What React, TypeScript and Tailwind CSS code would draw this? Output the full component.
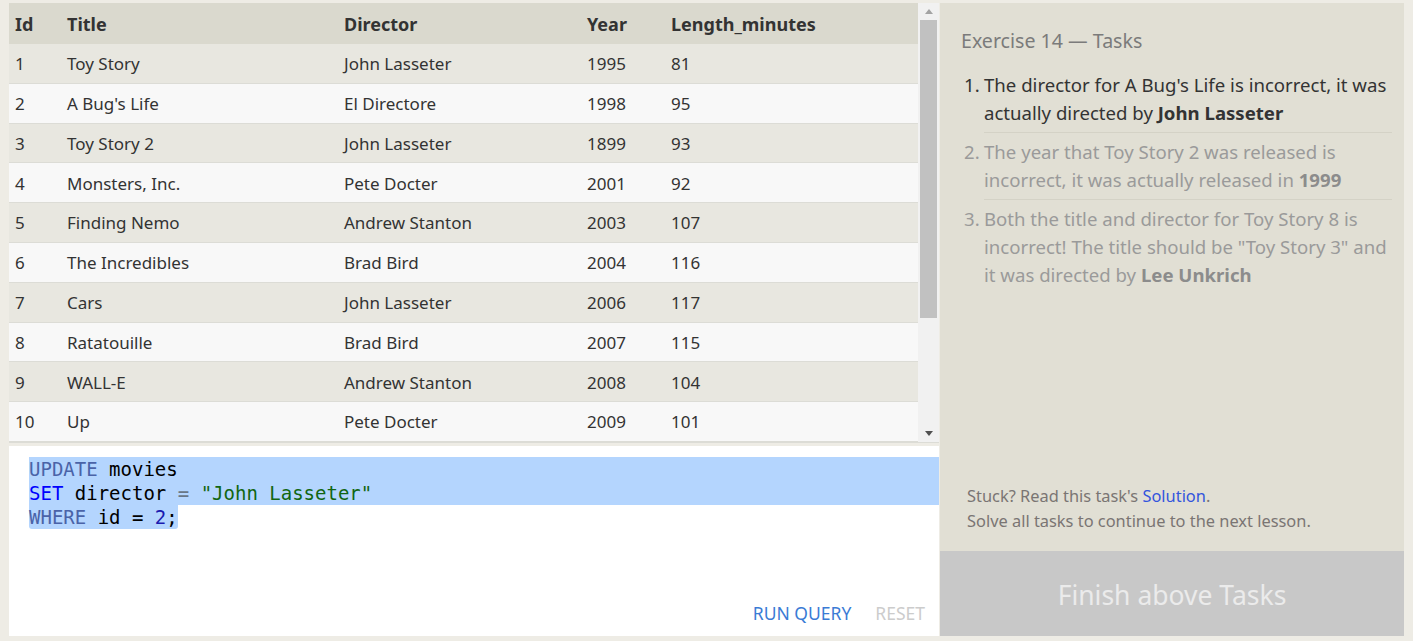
import React from "react";

const rows: [number, string, string, number, number][] = [
  [1, "Toy Story", "John Lasseter", 1995, 81],
  [2, "A Bug's Life", "El Directore", 1998, 95],
  [3, "Toy Story 2", "John Lasseter", 1899, 93],
  [4, "Monsters, Inc.", "Pete Docter", 2001, 92],
  [5, "Finding Nemo", "Andrew Stanton", 2003, 107],
  [6, "The Incredibles", "Brad Bird", 2004, 116],
  [7, "Cars", "John Lasseter", 2006, 117],
  [8, "Ratatouille", "Brad Bird", 2007, 115],
  [9, "WALL-E", "Andrew Stanton", 2008, 104],
  [10, "Up", "Pete Docter", 2009, 101],
];

function Row({ r, i }: { r: (typeof rows)[number]; i: number }) {
  return (
    <div
      className={`flex h-[39.8px] items-center border-b border-[#dcdcd6] pt-[1px] text-[17px] text-[#333] ${
        i % 2 === 0 ? "bg-[#e8e7e0]" : "bg-[#f8f8f8]"
      }`}
    >
      <div className="w-[52px] pl-[6px]">{r[0]}</div>
      <div className="w-[277px] pl-[6px]">{r[1]}</div>
      <div className="w-[243px] pl-[6px]">{r[2]}</div>
      <div className="w-[84px] pl-[6px]">{r[3]}</div>
      <div className="flex-1 pl-[6px]">{r[4]}</div>
    </div>
  );
}

export default function App() {
  return (
    <div
      className="flex h-[641px] w-[1413px] bg-[#eeece5] pl-[9px] pr-[9px] pt-[3px] pb-[5px]"
      style={{ fontFamily: '"Noto Sans", "Open Sans", sans-serif' }}
    >
      <div className="flex w-[930px] flex-col">
        <div className="flex h-[440px] border-b border-[#dcdcd6]">
          <div className="flex-1">
            <div className="flex h-[41px] items-center bg-[#dad9ce] pt-[1px] text-[18px] font-bold text-[#333]">
              <div className="w-[52px] pl-[6px]">Id</div>
              <div className="w-[277px] pl-[6px]">Title</div>
              <div className="w-[243px] pl-[6px]">Director</div>
              <div className="w-[84px] pl-[6px]">Year</div>
              <div className="flex-1 pl-[6px]">Length_minutes</div>
            </div>
            {rows.map((r, i) => (
              <Row key={r[0]} r={r} i={i} />
            ))}
          </div>
          <div className="flex w-[21px] flex-col bg-[#f1f1f1]">
            <div className="flex h-[17px] items-center justify-center">
              <svg width="8" height="5" viewBox="0 0 8 5">
                <path d="M4 0L8 5H0Z" fill="#a3a3a3" />
              </svg>
            </div>
            <div className="mx-[2px] h-[298px] bg-[#c1c1c1]" />
            <div className="flex-1" />
            <div className="flex h-[17px] items-center justify-center">
              <svg width="8" height="5" viewBox="0 0 8 5">
                <path d="M0 0H8L4 5Z" fill="#505050" />
              </svg>
            </div>
          </div>
        </div>
        <div className="mt-[3px] flex flex-1 flex-col bg-white">
          <div
            className="pt-[11px] text-[19px] leading-[24px] text-black"
            style={{ fontFamily: '"DejaVu Sans Mono", "Liberation Mono", monospace' }}
          >
            <div className="ml-[20px] bg-[#b4d5fe]">
              <span className="text-[#4a63a8]">UPDATE</span> movies
            </div>
            <div className="ml-[20px] bg-[#b4d5fe]">
              <span className="text-[#0000ff]">SET</span> director{" "}
              <span className="text-[#687687]">=</span>{" "}
              <span className="text-[#116611]">"John Lasseter"</span>
            </div>
            <div className="ml-[20px] w-fit rounded-b-[3px] bg-[#b4d5fe]">
              <span className="text-[#4a63a8]">WHERE</span> id ={" "}
              <span className="text-[#1a1ab0]">2</span>;
            </div>
          </div>
          <div className="flex-1" />
          <div className="flex justify-end gap-[24px] pb-[10px] pr-[14px] text-[17.5px]">
            <span className="text-[#3a7bd5]">RUN QUERY</span>
            <span className="text-[#cccccc]">RESET</span>
          </div>
        </div>
      </div>
      <div className="ml-[1px] flex flex-1 flex-col bg-[#e1dfd4]">
        <div className="flex-1 pl-[21px] pr-[12px] pt-[23px]">
          <div className="text-[19.6px] text-[#7b7b7b]">Exercise 14 — Tasks</div>
          <ol className="mt-[16px] text-[18.6px] leading-[28px]">
            <li className="flex text-[#333]">
              <span className="w-[23px] shrink-0 pl-[3px]">1.</span>
              <div className="flex-1 border-b border-[#d4d2c6] pb-[5px]">
                The director for A Bug's Life is incorrect, it was actually directed by{" "}
                <b>John Lasseter</b>
              </div>
            </li>
            <li className="flex pt-[5px] text-[#9a9a9a]">
              <span className="w-[23px] shrink-0 pl-[3px]">2.</span>
              <div className="flex-1 border-b border-[#d4d2c6] pb-[5px]">
                The year that Toy Story 2 was released is incorrect, it was actually released in{" "}
                <b className="text-[#8c8c8c]">1999</b>
              </div>
            </li>
            <li className="flex pt-[5px] text-[#9a9a9a]">
              <span className="w-[23px] shrink-0 pl-[3px]">3.</span>
              <div className="flex-1">
                Both the title and director for Toy Story 8 is incorrect! The title should be "Toy
                Story 3" and it was directed by <b className="text-[#8c8c8c]">Lee Unkrich</b>
              </div>
            </li>
          </ol>
        </div>
        <div className="pb-[18px] pl-[27px] text-[16.4px] leading-[25px] text-[#7a7573]">
          <div>
            Stuck? Read this task's <span className="text-[#3355dd]">Solution</span>.
          </div>
          <div>Solve all tasks to continue to the next lesson.</div>
        </div>
        <div className="flex h-[85px] items-center justify-center bg-[#c8c8c8] pt-[5px] text-[26.5px] text-[#ebebeb]">
          Finish above Tasks
        </div>
      </div>
    </div>
  );
}
